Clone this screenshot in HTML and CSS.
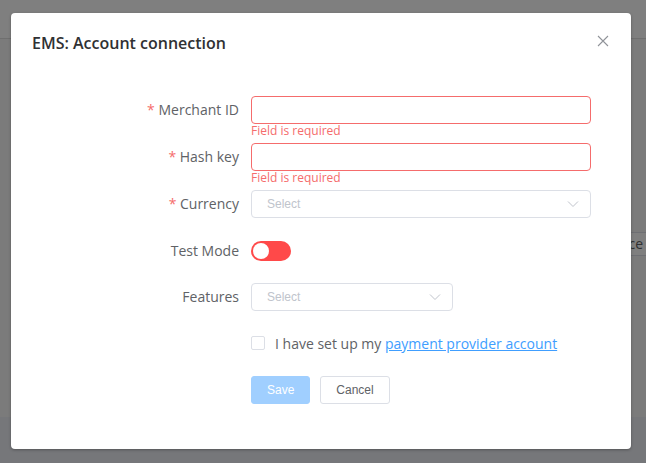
FILE: index.html
```html
<!DOCTYPE html>
<html>
<head>
<meta charset="utf-8">
<link rel="stylesheet" href="styles.css">
</head>
<body>
<div class="page">
  <header class="topbar"></header>
  <main class="main">
    <div class="tool">Service</div>
  </main>
  <footer class="foot"></footer>
</div>
<div class="mask"></div>
<div class="dialog">
  <div class="dlg-header">
    <span class="dlg-title">EMS: Account connection</span>
    <button class="dlg-close" aria-label="Close">
      <svg width="16" height="16" viewBox="0 0 16 16"><path d="M3 3L13 13M13 3L3 13" stroke="#909399" stroke-width="1.1" fill="none"/></svg>
    </button>
  </div>
  <div class="dlg-body">
    <div class="form-item">
      <label class="label"><span class="req">*</span> Merchant ID</label>
      <div class="content">
        <input class="input is-error" type="text">
        <div class="error">Field is required</div>
      </div>
    </div>
    <div class="form-item">
      <label class="label"><span class="req">*</span> Hash key</label>
      <div class="content">
        <input class="input is-error" type="text">
        <div class="error">Field is required</div>
      </div>
    </div>
    <div class="form-item">
      <label class="label"><span class="req">*</span> Currency</label>
      <div class="content">
        <div class="select">
          <span class="placeholder">Select</span>
          <svg class="chev" width="12" height="8" viewBox="0 0 12 8"><path d="M1 1.5L6 6.5L11 1.5" stroke="#c0c4cc" stroke-width="1" fill="none"/></svg>
        </div>
      </div>
    </div>
    <div class="form-item switch-row">
      <label class="label">Test Mode</label>
      <div class="content">
        <span class="switch"><span class="knob"></span></span>
      </div>
    </div>
    <div class="form-item">
      <label class="label">Features</label>
      <div class="content">
        <div class="select select-sm">
          <span class="placeholder">Select</span>
          <svg class="chev" width="12" height="8" viewBox="0 0 12 8"><path d="M1 1.5L6 6.5L11 1.5" stroke="#c0c4cc" stroke-width="1" fill="none"/></svg>
        </div>
      </div>
    </div>
    <div class="form-item check-row">
      <span class="label"></span>
      <div class="content">
        <span class="checkbox"></span>
        <span class="check-label">I have set up my <a class="link" href="#">payment provider account</a></span>
      </div>
    </div>
    <div class="form-item btn-row">
      <span class="label"></span>
      <div class="content">
        <button class="btn btn-primary">Save</button>
        <button class="btn btn-default">Cancel</button>
      </div>
    </div>
  </div>
</div>
</body>
</html>
```
FILE: styles.css
```css
html, body {
  margin: 0;
  padding: 0;
}
body {
  width: 646px;
  height: 463px;
  overflow: hidden;
  font-family: "Open Sans", "DejaVu Sans", sans-serif;
  position: relative;
}
.page {
  display: flex;
  flex-direction: column;
  height: 463px;
}
.topbar {
  height: 38px;
  background: #ffffff;
  border-bottom: 1px solid #dedede;
}
.main {
  flex: 1;
  background: #f6f6f6;
  display: flex;
  justify-content: flex-end;
  align-items: flex-start;
}
.tool {
  margin-top: 193px;
  height: 22px;
  line-height: 22px;
  background: #ffffff;
  border-top: 1px solid #dcdfe6;
  border-bottom: 1px solid #dcdfe6;
  font-size: 14px;
  color: #606266;
  padding: 0 3px 0 10px;
}
.foot {
  height: 46px;
  background: #eceef5;
}
.mask {
  position: absolute;
  inset: 0;
  background: rgba(0, 0, 0, 0.5);
}
.dialog {
  position: absolute;
  left: 11px;
  top: 13px;
  width: 620px;
  height: 436px;
  background: #ffffff;
  border-radius: 4px;
  box-shadow: 0 1px 3px rgba(0, 0, 0, 0.3);
}
.dlg-header {
  position: relative;
  padding: 18px 20px 12px 21px;
}
.dlg-title {
  display: block;
  font-size: 16px;
  font-weight: 600;
  line-height: 24px;
  color: #303133;
}
.dlg-close {
  position: absolute;
  top: 20px;
  right: 20px;
  width: 16px;
  height: 16px;
  padding: 0;
  border: 0;
  background: none;
  display: flex;
}
.dlg-body {
  padding: 29px 20px 0;
}
.form-item {
  display: flex;
  margin-bottom: 19px;
}
.label {
  width: 220px;
  flex: none;
  box-sizing: border-box;
  padding-right: 12px;
  text-align: right;
  font-size: 14px;
  line-height: 28px;
  color: #606266;
}
.req {
  color: #f56c6c;
}
.content {
  position: relative;
  width: 340px;
  height: 28px;
  display: flex;
  align-items: center;
}
.input {
  display: block;
  width: 340px;
  height: 28px;
  box-sizing: border-box;
  border: 1px solid #dcdfe6;
  border-radius: 4px;
  padding: 0 15px;
  margin: 0;
  outline: none;
  background: #fff;
}
.input.is-error {
  border-color: #f56c6c;
}
.error {
  position: absolute;
  top: 100%;
  left: 0;
  padding-top: 1px;
  font-size: 12px;
  line-height: 12px;
  color: #f56c6c;
}
.select {
  width: 340px;
  height: 28px;
  box-sizing: border-box;
  border: 1px solid #dcdfe6;
  border-radius: 4px;
  display: flex;
  align-items: center;
  justify-content: space-between;
  padding: 0 11px 0 15px;
}
.select-sm {
  width: 202px;
}
.placeholder {
  font-family: "Liberation Sans", Arial, sans-serif;
  font-size: 12px;
  color: #c0c4cc;
}
.chev {
  display: block;
}
.switch-row {
  margin-bottom: 18px;
}
.switch {
  position: relative;
  display: block;
  width: 40px;
  height: 20px;
  border-radius: 10px;
  background: #ff4949;
}
.knob {
  position: absolute;
  top: 2px;
  left: 2px;
  width: 16px;
  height: 16px;
  border-radius: 50%;
  background: #ffffff;
}
.check-row {
  margin-bottom: 20px;
}
.check-row .content {
  height: 26px;
}
.checkbox {
  width: 14px;
  height: 14px;
  box-sizing: border-box;
  border: 1px solid #dcdfe6;
  border-radius: 2px;
  background: #fff;
  flex: none;
}
.check-label {
  margin-left: 10px;
  font-size: 14px;
  color: #606266;
  white-space: nowrap;
}
.link {
  color: #409eff;
  text-decoration: underline;
}
.btn-row {
  margin-bottom: 0;
}
.btn {
  height: 28px;
  padding: 0 15px;
  margin: 0;
  font-family: "Liberation Sans", Arial, sans-serif;
  font-size: 12px;
  border-radius: 3px;
  border: 1px solid #dcdfe6;
  background: #fff;
  color: #606266;
}
.btn-primary {
  background: #a0cfff;
  border-color: #a0cfff;
  color: #ffffff;
}
.btn-default {
  margin-left: 10px;
}
```
